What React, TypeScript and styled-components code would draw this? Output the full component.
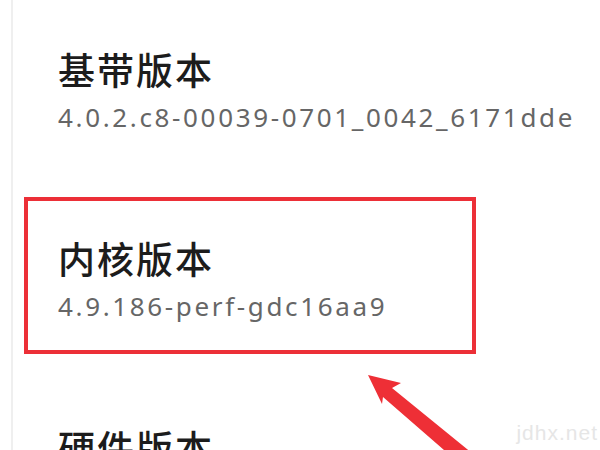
import React from 'react';
import styled, { createGlobalStyle } from 'styled-components';

const GlobalStyle = createGlobalStyle`
	html, body {
		margin: 0;
		padding: 0;
		background: #ffffff;
	}
	body {
		width: 600px;
		height: 450px;
		overflow: hidden;
		font-family: 'Noto Sans', 'Noto Sans CJK SC', sans-serif;
	}
`;

const Screen = styled.div`
	position: relative;
	width: 600px;
	height: 450px;
	overflow: hidden;
	background: #ffffff;
`;

const Panel = styled.div`
	margin-left: 11px;
	height: 100%;
	border-left: 2px solid #efefef;
	padding-top: 8px;
	display: flex;
	flex-direction: column;
	gap: 32px;
`;

const Row = styled.div<{ $highlighted?: boolean }>`
	width: 452px;
	margin-left: 11px;
	box-sizing: border-box;
	border: 4px solid ${({ $highlighted }) => ($highlighted ? '#ec2f37' : 'transparent')};
	padding: 34px 0 28px 30px;
	display: flex;
	flex-direction: column;
	gap: 9px;
	flex-shrink: 0;
`;

const Title = styled.div`
	font-family: 'Noto Sans CJK SC', sans-serif;
	font-size: 37px;
	font-weight: 500;
	line-height: 46px;
	letter-spacing: 2px;
	color: #1c1c1c;
	white-space: nowrap;
`;

const Value = styled.div`
	font-family: 'Noto Sans', 'Noto Sans CJK SC', sans-serif;
	font-size: 26px;
	line-height: 32px;
	letter-spacing: 2.65px;
	color: #666666;
	white-space: nowrap;
`;

const Arrow = styled.svg`
	position: absolute;
	left: 0;
	top: 0;
	width: 600px;
	height: 450px;
	pointer-events: none;
`;

const Watermark = styled.div`
	position: absolute;
	right: 2px;
	bottom: 5px;
	font-family: 'Liberation Sans', Arial, sans-serif;
	font-size: 21px;
	letter-spacing: 1px;
	color: #e6e6e6;
`;

const items = [
	{ title: '基带版本', value: '4.0.2.c8-00039-0701_0042_6171dde' },
	{ title: '内核版本', value: '4.9.186-perf-gdc16aa9', highlighted: true },
	{ title: '硬件版本', value: 'V1.0' }
];

const App = () => {
	return (
		<>
			<GlobalStyle />
			<Screen>
				<Panel>
					{items.map((item) => (
						<Row key={item.title} $highlighted={item.highlighted}>
							<Title>{item.title}</Title>
							<Value>{item.value}</Value>
						</Row>
					))}
				</Panel>
				<Watermark>jdhx.net</Watermark>
				<Arrow viewBox='0 0 600 450'>
					<polygon
						fill='#ee2f36'
						points='368,375 401,383 392,388 478,458 467,470 383,397 382,404'
					/>
				</Arrow>
			</Screen>
		</>
	);
};

export default App;
